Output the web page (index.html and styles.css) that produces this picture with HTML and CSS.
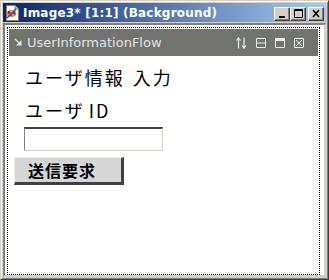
FILE: index.html
```html
<!DOCTYPE html>
<html>
<head>
<meta charset="utf-8">
<link rel="stylesheet" href="styles.css">
</head>
<body>
<div class="win">
  <div class="titlebar">
    <svg class="ticon" width="16" height="16" viewBox="0 0 16 16">
      <path d="M2.5 0.5 H11 L14.5 4 V15.5 H2.5 Z" fill="#fff" stroke="#808080"/>
      <path d="M11 0.5 V4 H14.5" fill="#d4d0c8" stroke="#808080"/>
      <ellipse cx="7.5" cy="8.5" rx="5" ry="3.6" fill="#e88a2c"/>
      <circle cx="5" cy="7.5" r="1.2" fill="#c00000"/>
      <circle cx="8" cy="6.7" r="1.1" fill="#f0e000"/>
      <circle cx="10.3" cy="8.3" r="1.1" fill="#2040c0"/>
      <circle cx="6.8" cy="10.3" r="1.1" fill="#00a040"/>
      <path d="M3 13 L12 4" stroke="#2a4ad0" stroke-width="1.6"/>
    </svg>
    <span class="title">Image3* [1:1] (Background)</span>
    <div class="tbtns">
      <div class="tbtn"><svg width="14" height="12" viewBox="0 0 14 12"><rect x="4" y="8" width="6" height="2" fill="#000"/></svg></div>
      <div class="tbtn"><svg width="14" height="12" viewBox="0 0 14 12"><path d="M3.5 1.5 H11.5 V9.5 H3.5 Z M3.5 2.5 H11.5" fill="none" stroke="#000"/></svg></div>
      <div class="tbtn close"><svg width="14" height="12" viewBox="0 0 14 12"><path d="M4 2 L10 9 M10 2 L4 9" stroke="#000" stroke-width="1.6"/></svg></div>
    </div>
  </div>
  <div class="client">
    <div class="panel">
      <div class="phead">
        <svg class="parrow" width="9" height="9" viewBox="0 0 9 9">
          <path d="M1 1 L6.5 6.5" stroke="#e6e6e6" stroke-width="1.3"/>
          <path d="M7.5 2 V7.5 H2 Z" fill="#e6e6e6"/>
        </svg>
        <span class="pname">UserInformationFlow</span>
        <div class="picons">
          <svg width="11" height="12" viewBox="0 0 11 12">
            <path d="M2.5 1 V11.5 M0.5 3.5 L2.5 0.8 L4.5 3.5" fill="none" stroke="#ececec" stroke-width="1.2"/>
            <path d="M8 0.5 V11 M6 8.5 L8 11.2 L10 8.5" fill="none" stroke="#ececec" stroke-width="1.2"/>
          </svg>
          <svg width="10" height="10" viewBox="0 0 10 10">
            <path d="M0.5 0.5 H9.5 V9.5 H0.5 Z M0.5 5 H9.5" fill="none" stroke="#ececec"/>
          </svg>
          <svg width="10" height="10" viewBox="0 0 10 10">
            <path d="M0.5 0.5 H9.5 V9.5 H0.5 Z" fill="none" stroke="#ececec"/>
            <rect x="0" y="0" width="10" height="3" fill="#ececec"/>
          </svg>
          <svg width="10" height="10" viewBox="0 0 10 10">
            <path d="M0.5 0.5 H9.5 V9.5 H0.5 Z M2 2 L8 8 M8 2 L2 8" fill="none" stroke="#ececec"/>
          </svg>
        </div>
      </div>
      <div class="pbody">
        <div class="label l1">ユーザ情報 入力</div>
        <div class="label l2">ユーザ<span class="id">ID</span></div>
        <div class="field"></div>
        <div class="button">送信要求</div>
      </div>
    </div>
  </div>
</div>
</body>
</html>
```

FILE: styles.css
```css
* { box-sizing: border-box; }
html, body { margin: 0; padding: 0; background: #d4d0c8; }
.win {
  width: 329px;
  height: 280px;
  background: #d4d0c8;
  border-top: 1px solid #d4d0c8;
  border-left: 1px solid #d4d0c8;
  border-right: 1px solid #404040;
  border-bottom: 1px solid #404040;
  box-shadow: inset 1px 1px 0 #ffffff, inset -1px -1px 0 #808080;
  padding: 2px;
  display: flex;
  flex-direction: column;
}
.titlebar {
  height: 19px;
  flex: none;
  margin-bottom: 1px;
  background: linear-gradient(to right, #0a246a, #a6caf0);
  display: flex;
  align-items: center;
  padding-left: 1px;
}
.ticon { flex: none; }
.title {
  margin-left: 3px;
  font-family: "DejaVu Sans", sans-serif;
  font-weight: bold;
  font-size: 12px;
  letter-spacing: 0.2px;
  color: #ffffff;
  white-space: nowrap;
}
.tbtns {
  margin-left: auto;
  display: flex;
  margin-right: 2px;
  margin-top: 2px;
}
.tbtn {
  width: 16px;
  height: 14px;
  background: #d4d0c8;
  border-top: 1px solid #ffffff;
  border-left: 1px solid #ffffff;
  border-right: 1px solid #404040;
  border-bottom: 1px solid #404040;
  box-shadow: inset -1px -1px 0 #808080;
  display: flex;
}
.tbtn.close { margin-left: 2px; }
.client {
  flex: 1;
  background: #ffffff;
  border-top: 2px solid #808080;
  border-left: 2px solid #808080;
  border-right: 2px solid #d4d0c8;
  border-bottom: 2px solid #d4d0c8;
  padding: 2px 4px 0 2px;
}
.panel {
  width: 313px;
  height: 248px;
  border: 1px dotted #000000;
  padding: 1px;
}
.phead {
  height: 27px;
  background: #71736f;
  display: flex;
  align-items: center;
  padding-left: 5px;
}
.parrow { flex: none; }
.pname {
  margin-left: 4px;
  font-family: "DejaVu Sans", sans-serif;
  font-size: 13px;
  color: #e4e4e4;
  white-space: nowrap;
}
.picons {
  margin-left: auto;
  margin-right: 14px;
  display: flex;
  align-items: center;
  gap: 9px;
}
.pbody {
  padding-top: 9px;
}
.label {
  font-family: "Noto Sans CJK JP", sans-serif;
  font-size: 18px;
  letter-spacing: 2px;
  word-spacing: 2px;
  line-height: 24px;
  color: #000000;
  margin-left: 16px;
}
.l2 { margin-top: 9px; }
.id { margin-left: 4px; }
.field {
  margin-top: 5px;
  margin-left: 15px;
  width: 139px;
  height: 24px;
  background: #ffffff;
  border-top: 2px solid #404040;
  border-left: 1px solid #808080;
  border-right: 1px solid #d4d0c8;
  border-bottom: 1px solid #d4d0c8;
}
.button {
  margin-top: 6px;
  margin-left: 5px;
  width: 110px;
  height: 28px;
  background: #d6d6d6;
  border-top: 1px solid #ececec;
  border-left: 1px solid #ececec;
  border-right: 3px solid #404040;
  border-bottom: 3px solid #404040;
  font-family: "Noto Sans CJK JP", sans-serif;
  font-weight: bold;
  font-size: 16px;
  letter-spacing: 1px;
  line-height: 24px;
  padding-left: 13px;
  color: #000000;
}
```
